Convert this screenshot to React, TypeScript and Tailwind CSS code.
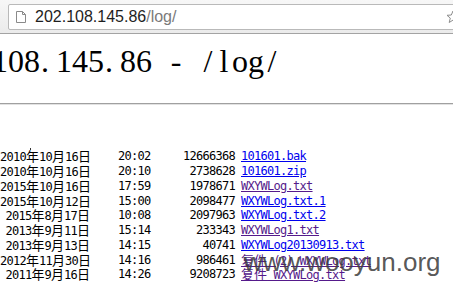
import React from "react";

type Entry = {
  y: string;
  m: string;
  d: string;
  t: string;
  s: string;
  f: string;
  visited: boolean;
};

const entries: Entry[] = [
  { y: "2010", m: "10", d: "16", t: "20:02", s: "12666368", f: "101601.bak", visited: false },
  { y: "2010", m: "10", d: "16", t: "20:10", s: "2738628", f: "101601.zip", visited: false },
  { y: "2015", m: "10", d: "16", t: "17:59", s: "1978671", f: "WXYWLog.txt", visited: true },
  { y: "2015", m: "10", d: "12", t: "15:00", s: "2098477", f: "WXYWLog.txt.1", visited: false },
  { y: "2015", m: "8", d: "17", t: "10:08", s: "2097963", f: "WXYWLog.txt.2", visited: false },
  { y: "2013", m: "9", d: "11", t: "15:14", s: "233343", f: "WXYWLog1.txt", visited: true },
  { y: "2013", m: "9", d: "13", t: "14:15", s: "40741", f: "WXYWLog20130913.txt", visited: false },
  { y: "2012", m: "11", d: "30", t: "14:16", s: "986461", f: "复件 (2) WXYWLog.txt", visited: true },
  { y: "2011", m: "9", d: "16", t: "14:26", s: "9208723", f: "复件 WXYWLog.txt", visited: true },
];

function Cjk({ children }: { children: React.ReactNode }) {
  return (
    <span className="font-['Noto_Sans_CJK_SC',sans-serif] text-[13px] tracking-[0px]">
      {children}
    </span>
  );
}

// Splits mixed text so Han characters get the CJK face.
function mixed(text: string) {
  return text.split(/([\u4e00-\u9fff]+)/).map((part, i) =>
    /[\u4e00-\u9fff]/.test(part) ? <Cjk key={i}>{part}</Cjk> : <span key={i}>{part}</span>
  );
}

const heading = "202.108.145.86 - /log/";

function PageIcon() {
  return (
    <svg width="10" height="12" viewBox="0 0 10 12" className="shrink-0">
      <path
        d="M0.5 0.5 H6.5 L9.5 3.5 V11.5 H0.5 Z"
        fill="#fff"
        stroke="#8a8a8a"
        strokeWidth="1"
      />
      <path d="M6.5 0.5 V3.5 H9.5" fill="none" stroke="#8a8a8a" strokeWidth="1" />
    </svg>
  );
}

function StarIcon() {
  return (
    <svg width="14" height="14" viewBox="0 0 14 14">
      <path
        d="M7 1 L8.7 5 L13 5.3 L9.7 8.1 L10.8 12.5 L7 10.1 L3.2 12.5 L4.3 8.1 L1 5.3 L5.3 5 Z"
        fill="none"
        stroke="#8d8d8d"
        strokeWidth="1"
        strokeLinejoin="round"
      />
    </svg>
  );
}

export default function App() {
  return (
    <div className="relative w-[453px] h-[292px] overflow-hidden bg-white">
      {/* toolbar */}
      <div className="h-[34px] bg-gradient-to-b from-[#f7f7f7] to-[#ebebeb] border-b border-[#a3a3a3] pt-[4px] pl-[8px]">
        <div className="relative w-[470px] h-[26px] bg-white border border-[#b9b9b9] rounded-[2px] flex items-center pl-[7px]">
          <PageIcon />
          <div className="ml-[9px] font-['Liberation_Sans',Arial,sans-serif] text-[16px] leading-none text-[#1e1e1e]">
            202.108.145.86<span className="text-[#7a7a7a]">/log/</span>
          </div>
          <div className="absolute left-[437px] top-[5px]">
            <StarIcon />
          </div>
        </div>
      </div>

      {/* page title */}
      <h1 className="mt-[11px] ml-[-72px] h-8 flex whitespace-pre font-['Liberation_Serif','Times_New_Roman',serif] text-[32px] leading-none font-normal text-black">
        {heading.split("").map((c, i) =>
          c === "." ? (
            <span key={i} className="w-4 shrink-0 pl-[1px] text-left">
              {c}
            </span>
          ) : (
            <span key={i} className="w-4 shrink-0 text-center">
              {c}
            </span>
          )
        )}
      </h1>

      <div className="mt-[26px] h-[2px] border-t border-[#a0a0a0] bg-[#e2e2e2]" />

      <div className="mt-[43px] ml-[30px] w-[1px] h-[2px] bg-[#333]" />

      {/* listing */}
      <div className="mt-[-1px] font-['DejaVu_Sans_Mono','Liberation_Mono',monospace] text-[12px] tracking-[-0.72px] text-black">
        {entries.map((e, i) => (
          <div key={i} className="flex items-center h-[14.75px] whitespace-pre">
            <span className="w-[90px] text-right">
              {e.y}
              <Cjk>年</Cjk>
              {e.m}
              <Cjk>月</Cjk>
              {e.d}
              <Cjk>日</Cjk>
            </span>
            <span className="ml-[28px] w-[40px]">{e.t}</span>
            <span className="w-[77px] text-right">{e.s}</span>
            <a
              href="#"
              className={
                e.visited
                  ? "ml-[6px] underline text-[#551a8b]"
                  : "ml-[6px] underline text-[#0000ee]"
              }
            >
              {mixed(e.f)}
            </a>
          </div>
        ))}
      </div>

      {/* watermark */}
      <div className="absolute left-[244px] top-[249px] font-['Liberation_Sans',Arial,sans-serif] text-[26px] leading-none text-[#3c3c3cdd] pointer-events-none">
        www.wooyun.org
      </div>
    </div>
  );
}
